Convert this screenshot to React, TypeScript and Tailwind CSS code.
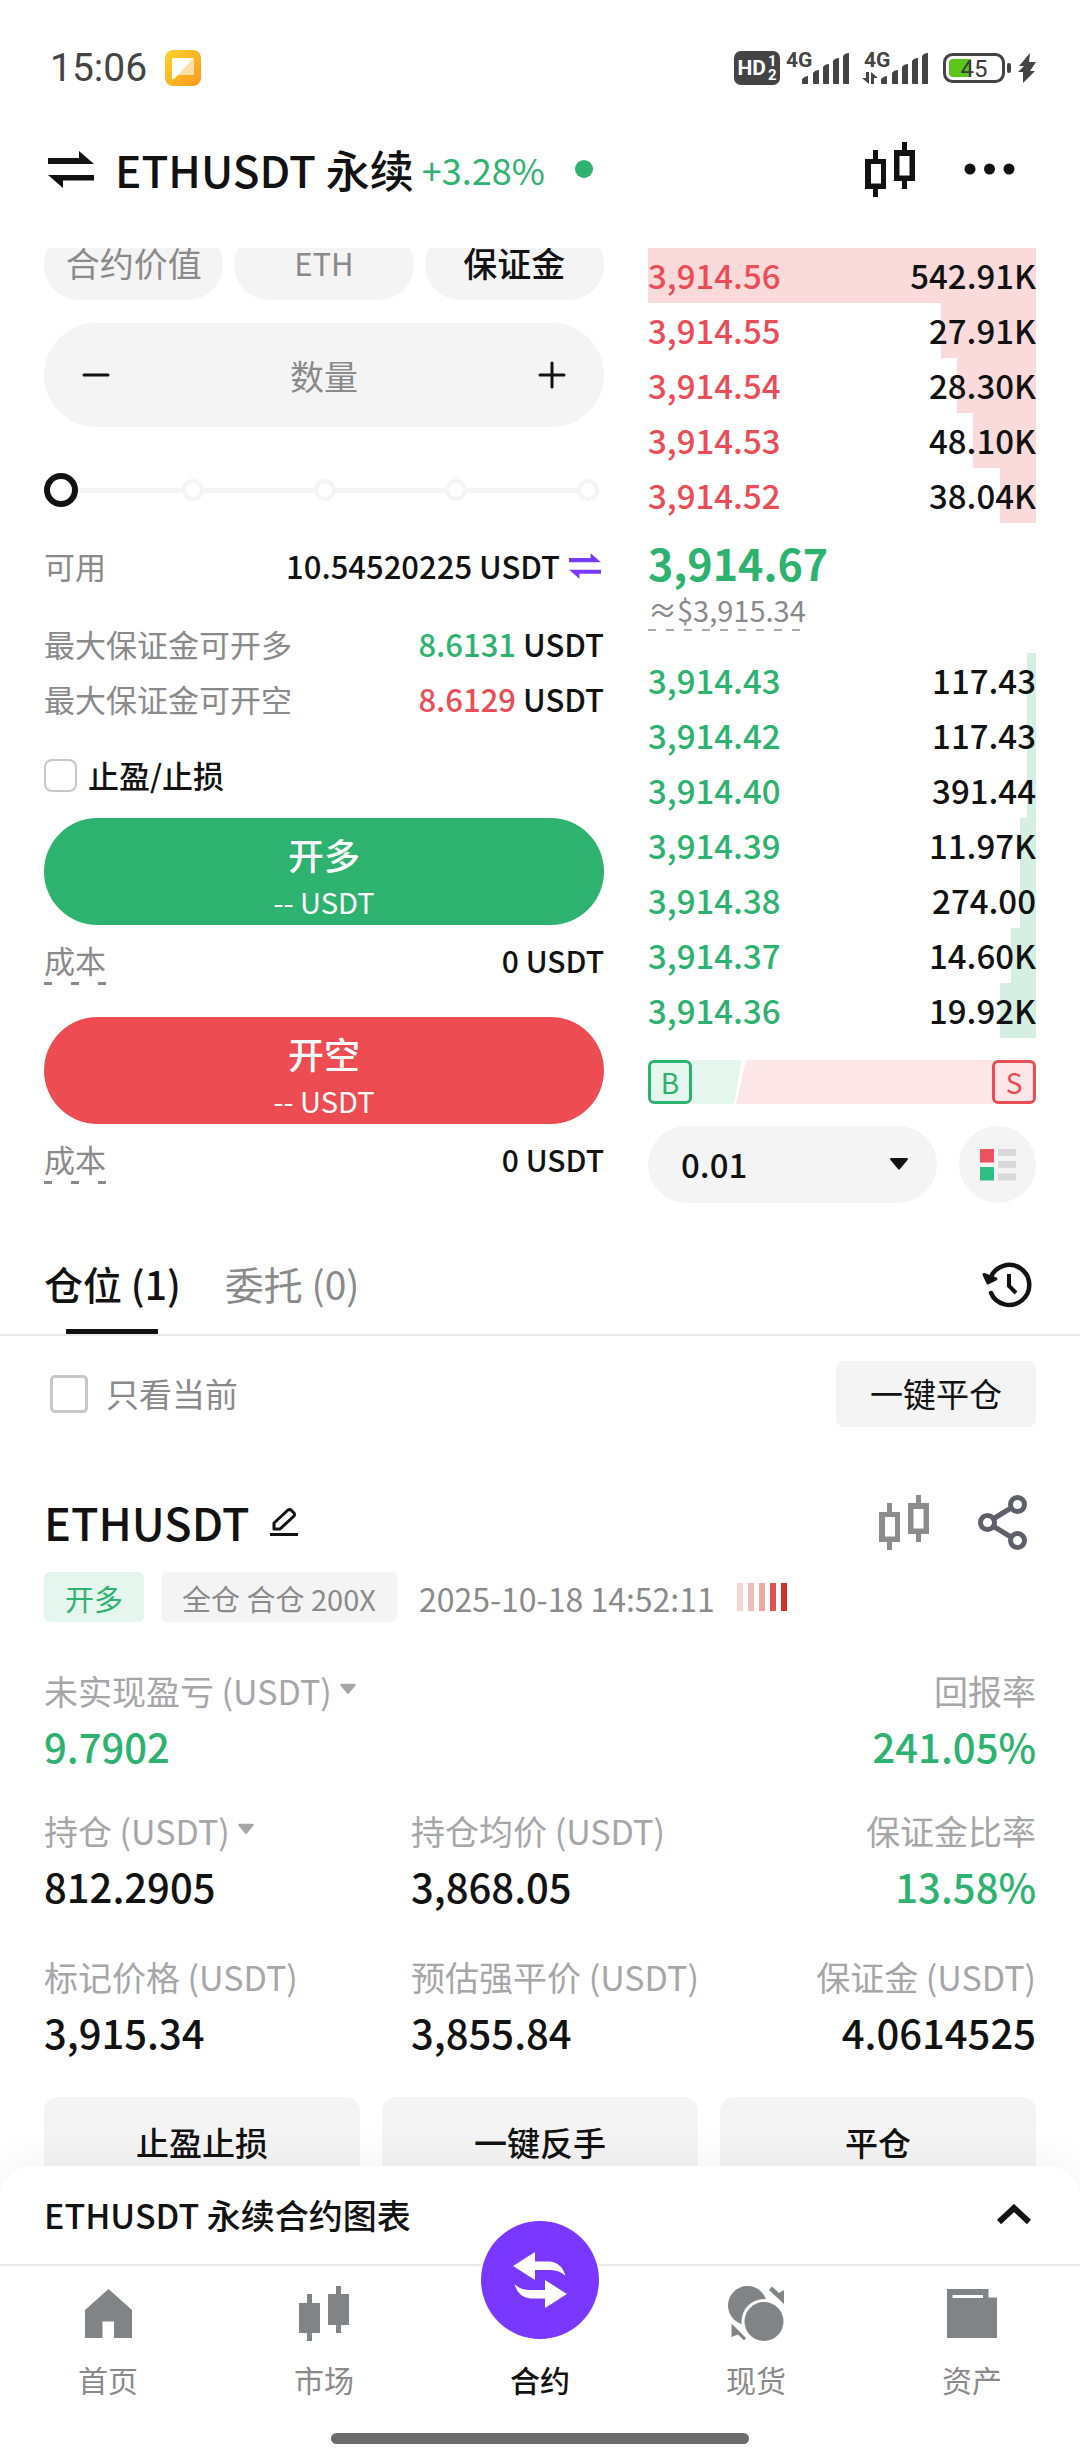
import React from "react";

const asks = [
  { price: "3,914.56", size: "542.91K", depth: 100 },
  { price: "3,914.55", size: "27.91K", depth: 24.5 },
  { price: "3,914.54", size: "28.30K", depth: 20.4 },
  { price: "3,914.53", size: "48.10K", depth: 16.2 },
  { price: "3,914.52", size: "38.04K", depth: 9.3 },
];

const bids = [
  { price: "3,914.43", size: "117.43", depth: 2.3 },
  { price: "3,914.42", size: "117.43", depth: 2.3 },
  { price: "3,914.40", size: "391.44", depth: 2.3 },
  { price: "3,914.39", size: "11.97K", depth: 4.2 },
  { price: "3,914.38", size: "274.00", depth: 4.2 },
  { price: "3,914.37", size: "14.60K", depth: 6.4 },
  { price: "3,914.36", size: "19.92K", depth: 9.3 },
];

function SwapIcon({ className }: { className: string }) {
  return (
    <svg viewBox="0 0 46 37" className={className} fill="currentColor" aria-hidden="true">
      <path d="M0 7H31V0L46 13H0ZM46 24H0L15 37V29.500H46Z" />
    </svg>
  );
}

function CandlesIcon({ className, solid = false }: { className: string; solid?: boolean }) {
  return (
    <svg viewBox="0 0 50 55" className={className} fill="currentColor" aria-hidden="true">
      <path d="M8 8H13V17H21V47H13V55H8V47H0V17H8ZM37 0H42V8H50V39H42V47H37V39H29V8H37Z" />
      {!solid && <path fill="#fff" d="M6 22H16V41.500H6ZM34.500 14H44.500V33.500H34.500Z" />}
    </svg>
  );
}

function Caret({ className }: { className: string }) {
  return (
    <svg viewBox="0 0 18 12" className={className} fill="currentColor" aria-hidden="true">
      <path d="M1 0H17Q18.500 .6 17.500 2L10 11Q9 12 8 11L.5 2Q-.5 .6 1 0Z" />
    </svg>
  );
}

function SignalBars() {
  return (
    <svg viewBox="0 0 48 31" className="h-[31px] w-12" fill="#444" aria-hidden="true">
      <path d="M0 26Q3 23 6 23V31H1Q0 31 0 30ZM11 20Q13 17 17 17V31H12Q11 31 11 30ZM21 14Q23 11 27 11V31H22Q21 31 21 30ZM31 8Q33 5 37 5V31H32Q31 31 31 30ZM41 3Q43 0 47 0V31H42Q41 31 41 30Z" />
    </svg>
  );
}

function StatusBar() {
  return (
    <div className="flex h-[102px] items-center justify-between pl-[50px] pr-11 pt-[34px] font-['Roboto',sans-serif] text-[#444]">
      <div className="flex items-center gap-[18px]">
        <span className="text-[39px] leading-[40px]">15:06</span>
        <svg viewBox="0 0 36 36" className="size-9" aria-hidden="true">
          <defs>
            <linearGradient id="note" x1="0" y1="0" x2="1" y2="1">
              <stop offset="0" stopColor="#fbd32d" />
              <stop offset="1" stopColor="#fb9a1e" />
            </linearGradient>
          </defs>
          <rect width="36" height="36" rx="8" fill="url(#note)" />
          <path d="M28 9Q29 8 29 10V24Q29 25 28 25H11Z" fill="#fde0a8" />
          <path d="M8 8H28Q29 8 28 9L9 29Q7 30 7 28V9Q7 8 8 8Z" fill="#fff" />
        </svg>
      </div>
      <div className="flex items-center">
        <div className="flex h-[34px] w-[46px] items-center justify-center gap-[2px] rounded-[7px] bg-[#444] font-bold text-white">
          <span className="text-[21px] leading-none">HD</span>
          <span className="flex flex-col text-[15px] leading-[14px]">
            <span>1</span>
            <span>2</span>
          </span>
        </div>
        <div className="relative ml-[22px]">
          <SignalBars />
          <span className="absolute -left-4 -top-[3px] text-[21px] font-bold leading-[21px]">4G</span>
        </div>
        <div className="relative ml-[31px]">
          <SignalBars />
          <span className="absolute -left-[17px] -top-[3px] text-[21px] font-bold leading-[21px]">4G</span>
          <svg viewBox="0 0 16 12" className="absolute -left-[19px] bottom-0 h-3 w-4" fill="#444" aria-hidden="true">
            <path d="M4 0H7V12L0 6H4ZM9 12V0L16 6H12V12Z" />
          </svg>
        </div>
        <svg viewBox="0 0 70 30" className="ml-[14px] h-[30px] w-[70px]" aria-hidden="true">
          <rect x="1.500" y="1.500" width="59" height="27" rx="8" fill="none" stroke="#444" strokeWidth="3" />
          <path d="M10 6H28V24H10Q6 24 6 20V10Q6 6 10 6Z" fill="#5ac71a" />
          <rect x="64" y="10" width="4" height="10" rx="2" fill="#444" />
          <text x="31" y="24" textAnchor="middle" fontSize="24" fill="#3a3a3a">
            45
          </text>
        </svg>
        <svg viewBox="0 0 18 30" className="ml-[5px] h-[30px] w-[18px]" fill="#444" aria-hidden="true">
          <path d="M12 0L1 13H6L0 19H5L5 30L17 18H12L18 9H11Z" />
        </svg>
      </div>
    </div>
  );
}

function TitleBar() {
  return (
    <header className="flex h-[146px] items-start justify-between pl-12 pr-[65px] pt-[37px]">
      <div className="flex items-center">
        <button type="button" aria-label="切换交易对">
          <SwapIcon className="h-[37px] w-[46px]" />
        </button>
        <h1 className="ml-[21px] text-[44px] font-medium leading-[60px]">ETHUSDT 永续</h1>
        <span className="ml-2 text-[36px] leading-[60px] text-[#2db270]">+3.28%</span>
        <span className="ml-[30px] size-[18px] rounded-full bg-[#2db270]" />
      </div>
      <div className="flex h-[60px] items-center">
        <button type="button" aria-label="K线图">
          <CandlesIcon className="h-[55px] w-[50px]" />
        </button>
        <button type="button" aria-label="更多" className="ml-[49px]">
          <svg viewBox="0 0 51 12" className="h-3 w-[51px]" fill="currentColor" aria-hidden="true">
            <circle cx="6" cy="6" r="5.500" />
            <circle cx="25.500" cy="6" r="5.500" />
            <circle cx="45" cy="6" r="5.500" />
          </svg>
        </button>
      </div>
    </header>
  );
}

function CostRow() {
  return (
    <div className="flex items-start justify-between pt-[13px] text-[30px] leading-[44px]">
      <span className="text-[31px] text-[#8a8a8a]">
        成本
        <span className="block h-[3px] bg-[repeating-linear-gradient(90deg,#8a8a8a_0_8px,transparent_8px_27px)]" />
      </span>
      <span className="font-medium">0 USDT</span>
    </div>
  );
}

function SideButton({ label, className }: { label: string; className: string }) {
  return (
    <button type="button" className={`flex h-[107px] flex-col items-center rounded-full pt-2 text-white ${className}`}>
      <span className="text-[36px] font-medium leading-[56px]">{label}</span>
      <span className="text-[29px] leading-[38px]">-- USDT</span>
    </button>
  );
}

function OrderForm() {
  return (
    <form className="-mt-[18px] flex flex-[560] flex-col" onSubmit={(e) => e.preventDefault()}>
      <div className="grid grid-cols-3 gap-[11px] text-[34px] leading-[64px] text-[#8a8a8a]">
        <button type="button" className="h-[70px] rounded-full bg-[#f4f4f4] pb-1">合约价值</button>
        <button type="button" className="h-[70px] rounded-full bg-[#f4f4f4] pb-1 text-[31px]">ETH</button>
        <button type="button" className="h-[70px] rounded-full bg-[#f4f4f4] pb-1 font-medium text-[#121212]">保证金</button>
      </div>

      <div className="mt-[23px] flex h-[104px] items-center rounded-full bg-[#f4f4f4] px-[38px]">
        <button type="button" aria-label="减少">
          <svg viewBox="0 0 28 28" className="size-7" stroke="#121212" strokeWidth="3" strokeLinecap="round" aria-hidden="true">
            <path d="M2 14H26" />
          </svg>
        </button>
        <input
          aria-label="数量"
          placeholder="数量"
          className="min-w-0 flex-1 bg-transparent text-center text-[34px] outline-none placeholder:text-[#8a8a8a]"
        />
        <button type="button" aria-label="增加">
          <svg viewBox="0 0 28 28" className="size-7" stroke="#121212" strokeWidth="3" strokeLinecap="round" aria-hidden="true">
            <path d="M2 14H26M14 2V26" />
          </svg>
        </button>
      </div>

      <div className="relative mt-[46px] flex h-[34px] items-center">
        <div className="ml-[6px] mr-[5px] flex h-[5px] flex-1 items-center justify-between bg-[#f4f4f4]">
          {[0, 25, 50, 75, 100].map((p) => (
            <span key={p} className="size-[22px] rounded-full border-4 border-[#f4f4f4] bg-white" />
          ))}
        </div>
        <input
          type="range"
          min={0}
          max={100}
          defaultValue={0}
          aria-label="保证金比例"
          className="absolute inset-0 h-full w-full appearance-none bg-transparent [&::-webkit-slider-thumb]:size-[34px] [&::-webkit-slider-thumb]:appearance-none [&::-webkit-slider-thumb]:rounded-full [&::-webkit-slider-thumb]:border-[6px] [&::-webkit-slider-thumb]:border-[#121212] [&::-webkit-slider-thumb]:bg-white"
        />
      </div>

      <div className="mt-[37px] flex items-center justify-between text-[31px] leading-[44px]">
        <span className="text-[#8a8a8a]">可用</span>
        <span className="flex items-center gap-[9px] pr-[3px] font-medium">
          10.54520225 USDT
          <button type="button" aria-label="划转" className="text-[#7a3bff]">
            <SwapIcon className="h-[26px] w-8" />
          </button>
        </span>
      </div>

      <div className="mt-7 text-[31px] leading-[55px]">
        <div className="flex justify-between">
          <span className="text-[#8a8a8a]">最大保证金可开多</span>
          <span className="font-medium"><span className="text-[#2db270]">8.6131</span> USDT</span>
        </div>
        <div className="flex justify-between">
          <span className="text-[#8a8a8a]">最大保证金可开空</span>
          <span className="font-medium"><span className="text-[#ea4d55]">8.6129</span> USDT</span>
        </div>
      </div>

      <label className="mt-8 flex h-[34px] items-center gap-[11px] text-[31px] font-medium">
        <input type="checkbox" className="size-[33px] appearance-none rounded-lg border-2 border-[#c8c8c8] bg-white" />
        止盈/止损
      </label>

      <SideButton label="开多" className="mt-[26px] bg-[#2db270]" />
      <CostRow />
      <SideButton label="开空" className="mt-8 bg-[#ed4c53]" />
      <CostRow />
    </form>
  );
}

type Level = { price: string; size: string; depth: number };

function Levels({ rows, caption, priceClass, tint }: { rows: Level[]; caption: string; priceClass: string; tint: string }) {
  return (
    <table aria-label={caption} className="w-full text-[33px] font-medium leading-[55px]">
      <tbody>
        {rows.map((r) => (
          <tr
            key={r.price}
            style={{ backgroundImage: `linear-gradient(to left, ${tint} ${r.depth}%, transparent ${r.depth}%)` }}
          >
            <td className={`p-0 text-left ${priceClass}`}>{r.price}</td>
            <td className="p-0 text-right">{r.size}</td>
          </tr>
        ))}
      </tbody>
    </table>
  );
}

function OrderBook() {
  return (
    <section className="flex flex-[388] flex-col" aria-label="盘口">
      <Levels rows={asks} caption="卖盘" priceClass="text-[#ea4d55]" tint="#fadada" />
      <div className="flex h-[130px] flex-col items-start pt-[10px]">
        <strong className="text-[43px] font-bold leading-[58px] text-[#2db270]">3,914.67</strong>
        <span className="text-[29px] leading-[36px] text-[#8a8a8a]">
          ≈$3,915.34
          <span className="mt-[2px] block h-[2px] bg-[repeating-linear-gradient(90deg,#aaa_0_8px,transparent_8px_18px)]" />
        </span>
      </div>
      <Levels rows={bids} caption="买盘" priceClass="text-[#2db270]" tint="#d5efe2" />

      <div className="mt-[22px] flex h-11 text-[28px] leading-none">
        <span className="flex w-11 shrink-0 items-center justify-center rounded-[6px] border-[3px] border-[#2db270] bg-[#e4f6ed] text-[#2db270]">
          B
        </span>
        <span className="w-[50px] shrink-0 bg-[#e4f6ed] [clip-path:polygon(0_0,100%_0,84%_100%,0_100%)]" />
        <span className="-ml-[6px] flex-1 bg-[#fde6e8] [clip-path:polygon(10px_0,100%_0,100%_100%,0_100%)]" />
        <span className="flex w-11 shrink-0 items-center justify-center rounded-[6px] border-[3px] border-[#ea4d55] bg-[#fde6e8] text-[#ea4d55]">
          S
        </span>
      </div>

      <div className="mt-[22px] flex h-[77px] gap-[22px]">
        <div className="relative flex-1">
          <select
            aria-label="价格精度"
            className="h-full w-full appearance-none rounded-full bg-[#f4f4f4] pl-[33px] text-[33px] font-medium outline-none"
          >
            <option>0.01</option>
            <option>0.1</option>
          </select>
          <Caret className="pointer-events-none absolute right-[29px] top-8 h-3 w-[18px]" />
        </div>
        <button type="button" aria-label="盘口布局" className="flex size-[77px] items-center justify-center rounded-full bg-[#f4f4f4]">
          <svg viewBox="0 0 36 32" className="h-8 w-9" aria-hidden="true">
            <path fill="#ea5460" d="M0 0H14V13.500H0Z" />
            <path fill="#2fbf85" d="M0 18H14V31.500H0Z" />
            <path fill="#d9d9d9" d="M18 0H36V7H18ZM18 12H36V19H18ZM18 24.500H36V31.500H18Z" />
          </svg>
        </button>
      </div>
    </section>
  );
}

function PositionTabs() {
  return (
    <div className="flex h-[133px] items-end justify-between border-b-2 border-[#ebebeb] px-11">
      <div role="tablist" className="flex gap-11 text-[39px] leading-[56px]">
        <button type="button" role="tab" aria-selected="true" className="flex flex-col items-center font-medium">
          仓位 (1)
          <span className="mt-[18px] h-[5px] w-[92px] bg-[#121212]" />
        </button>
        <button type="button" role="tab" aria-selected="false" className="pb-[23px] text-[#8a8a8a]">
          委托 (0)
        </button>
      </div>
      <button type="button" aria-label="历史记录" className="mb-[24px] mr-[2px]">
        <svg viewBox="0 0 52 50" className="h-[50px] w-[52px]" fill="none" stroke="#121212" strokeWidth="4.500" aria-hidden="true">
          <path d="M8.500 18A20 20 0 1 1 9 33" strokeLinecap="round" />
          <path d="M27 14V26L34 33" strokeWidth="4" />
          <path d="M2 14.500L6 23L14 19Z" fill="#121212" strokeWidth="3" strokeLinejoin="round" />
        </svg>
      </button>
    </div>
  );
}

function Metric({ label, value, className = "", valueClass = "", caret = false }: { label: string; value: string; className?: string; valueClass?: string; caret?: boolean }) {
  return (
    <div className={className}>
      <dt className="flex items-center gap-2 text-[34px] leading-[54px] text-[#a6a6a8]">
        <span className="flex-auto">{label}</span>
        {caret && <Caret className="mb-1 h-3 w-4" />}
      </dt>
      <dd className={`text-[40px] font-medium leading-[56px] ${valueClass}`}>{value}</dd>
    </div>
  );
}

function Position() {
  return (
    <section className="flex flex-col px-11">
      <div className="mt-[25px] flex h-[66px] items-center justify-between text-[33px]">
        <label className="flex items-center gap-[18px] pl-[6px] text-[#8a8a8a]">
          <input type="checkbox" className="size-[38px] appearance-none rounded-[5px] border-[3px] border-[#c8c8c8] bg-white" />
          只看当前
        </label>
        <button type="button" className="h-full rounded-lg bg-[#f4f4f4] px-[34px]">一键平仓</button>
      </div>

      <div className="mt-[62px] flex h-[66px] items-center">
        <h2 className="text-[45px] font-medium">ETHUSDT</h2>
        <button type="button" aria-label="编辑" className="ml-5">
          <svg viewBox="0 0 30 30" className="size-[30px]" fill="none" stroke="#121212" strokeWidth="3" aria-hidden="true">
            <path d="M1 27.500H29" />
            <path d="M5 22V16L19 3Q21 2 22.500 3.500L25 6Q26 8 25 9L11 22Z" strokeLinejoin="round" />
          </svg>
        </button>
        <button type="button" aria-label="K线图" className="ml-auto text-[#8c8c8c]">
          <CandlesIcon className="h-[55px] w-[50px]" />
        </button>
        <button type="button" aria-label="分享" className="ml-[49px] mr-[9px]">
          <svg viewBox="0 0 49 55" className="h-[55px] w-[49px]" fill="none" stroke="#5d5f69" strokeWidth="5" aria-hidden="true">
            <path d="M15 24L33 13M15 31L33 42" />
            <circle cx="9.500" cy="27.500" r="7" />
            <circle cx="39.500" cy="9.500" r="7" />
            <circle cx="39.500" cy="45.500" r="7" />
          </svg>
        </button>
      </div>

      <div className="mt-[17px] flex h-[50px] items-center text-[29px] text-[#8a8a8a]">
        <span className="flex h-full items-center rounded-[6px] bg-[#e4f6ed] px-[21px] pt-1 text-[#2db270]">开多</span>
        <span className="ml-[17px] flex h-full items-center rounded-[6px] bg-[#f4f4f4] px-[21px] pt-1">全仓 合仓 200X</span>
        <time className="ml-[22px] pt-[2px] text-[32px]">2025-10-18 14:52:11</time>
        <span className="ml-[22px] flex h-7 gap-[5px]">
          <span className="w-[6px] bg-[#f6d3d1]" />
          <span className="w-[6px] bg-[#f1bdbb]" />
          <span className="w-[6px] bg-[#eca9a6]" />
          <span className="w-[6px] bg-[#e3544e]" />
          <span className="w-[6px] bg-[#d12f28]" />
        </span>
      </div>

      <dl className="mt-[42px] grid grid-cols-[37fr_35fr_28fr] gap-y-[30px]">
        <Metric label="未实现盈亏 (USDT)" value="9.7902" caret className="col-span-2 justify-self-start" valueClass="text-[#2db270]" />
        <Metric label="回报率" value="241.05%" className="text-right" valueClass="text-[#2db270]" />
        <Metric label="持仓 (USDT)" value="812.2905" caret className="justify-self-start" />
        <Metric label="持仓均价 (USDT)" value="3,868.05" />
        <Metric label="保证金比率" value="13.58%" className="text-right" valueClass="text-[#2db270]" />
        <Metric label="标记价格 (USDT)" value="3,915.34" className="pt-[6px]" />
        <Metric label="预估强平价 (USDT)" value="3,855.84" className="pt-[6px]" />
        <Metric label="保证金 (USDT)" value="4.0614525" className="pt-[6px] text-right" />
      </dl>

      <div className="mt-[37px] grid grid-cols-3 gap-[22px] text-[33px] font-medium">
        <button type="button" className="h-[92px] rounded-[14px] bg-[#f4f4f4]">止盈止损</button>
        <button type="button" className="h-[92px] rounded-[14px] bg-[#f4f4f4]">一键反手</button>
        <button type="button" className="h-[92px] rounded-[14px] bg-[#f4f4f4]">平仓</button>
      </div>
    </section>
  );
}

function NavItem({ label, children }: { label: string; children: React.ReactNode }) {
  return (
    <a href="#" className="flex flex-col items-center text-[#808486]">
      <span className="flex h-[60px] items-center justify-center">{children}</span>
      <span className="mt-[14px] text-[30px] leading-[44px] text-[#8a8a8a]">{label}</span>
    </a>
  );
}

function BottomBar() {
  return (
    <footer className="relative rounded-t-[32px] bg-white shadow-[0_-6px_40px_rgba(0,0,0,0.05)]">
      <button type="button" className="flex h-[100px] w-full items-center justify-between border-b-2 border-[#ebebeb] pb-[2px] pl-11 pr-[49px] text-[34px] font-medium">
        ETHUSDT 永续合约图表
        <svg viewBox="0 0 34 20" className="h-5 w-[34px]" fill="none" stroke="#121212" strokeWidth="6" aria-hidden="true">
          <path d="M2 18L17 4L32 18" />
        </svg>
      </button>
      <nav className="grid grid-cols-5 pt-[17px]">
        <NavItem label="首页">
          <svg viewBox="0 0 47 49" className="h-[49px] w-[47px]" fill="currentColor" aria-hidden="true">
            <path d="M0 21L23.500 0L47 21V49H29V32.500H17.500V49H0Z" />
          </svg>
        </NavItem>
        <NavItem label="市场">
          <CandlesIcon solid className="h-[55px] w-[50px]" />
        </NavItem>
        <a href="#" aria-current="page" className="relative flex flex-col items-center pt-[74px]">
          <span className="absolute -top-[62px] flex size-[118px] items-center justify-center rounded-full bg-[#7a37ff]">
            <svg viewBox="0 0 56 56" className="size-14" fill="#fff" aria-hidden="true">
              <path d="M1 14L23 0V9.500H38Q50 11 53.500 24Q48 18 38 18H23V28Z" />
              <path d="M55 42L33 56V46.500H18Q6 45 2.500 32Q8 38 18 38H33V28Z" />
            </svg>
          </span>
          <span className="text-[30px] font-medium leading-[44px]">合约</span>
        </a>
        <NavItem label="现货">
          <svg viewBox="0 0 56 55" className="h-[55px] w-14" fill="currentColor" aria-hidden="true">
            <circle cx="19.500" cy="19.500" r="19.500" />
            <circle cx="36" cy="35.500" r="22.500" fill="#fff" />
            <path fill="#fff" d="M0 33L22 55H0Z" />
            <circle cx="36" cy="35.500" r="19.500" />
            <path d="M44 .5L51 7L56 4V18L41 4ZM3.500 37.500L18 52L16 54.500L10 48.500L3.500 51Z" />
          </svg>
        </NavItem>
        <NavItem label="资产">
          <svg viewBox="0 0 50 49" className="h-[49px] w-[50px]" fill="currentColor" aria-hidden="true">
            <path fillRule="evenodd" d="M0 0H41.500V8.500H50V49H0ZM5.500 6V9H36V6Z" />
          </svg>
        </NavItem>
      </nav>
      <div className="flex justify-center pb-4 pt-8">
        <span className="h-[11px] w-[418px] rounded-full bg-[#6b6b6b]" />
      </div>
    </footer>
  );
}

export default function App() {
  return (
    <div lang="zh-CN" className="flex h-screen flex-col overflow-hidden bg-white font-['Noto_Sans_CJK_SC',sans-serif] text-[#121212]">
      <StatusBar />
      <TitleBar />
      <main className="min-h-0 flex-1 overflow-hidden">
        <div className="flex gap-11 px-11">
          <OrderForm />
          <OrderBook />
        </div>
        <PositionTabs />
        <Position />
      </main>
      <BottomBar />
    </div>
  );
}
